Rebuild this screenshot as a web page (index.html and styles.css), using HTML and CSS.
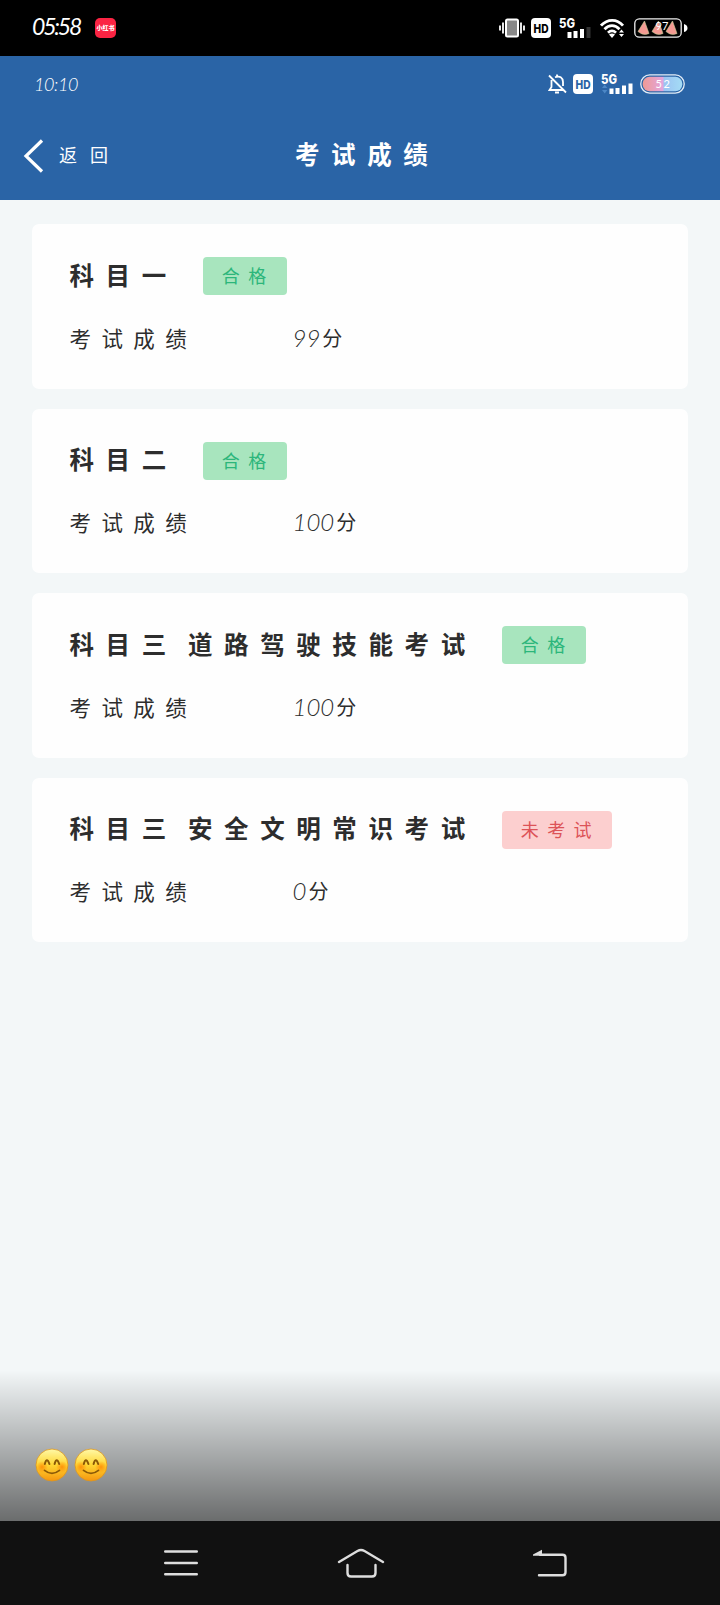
FILE: index.html
```html
<!DOCTYPE html>
<html lang="zh-CN">
<head>
  <meta charset="UTF-8">
  <meta name="viewport" content="width=device-width, initial-scale=1.0">
  <title>考试成绩</title>
  <link rel="stylesheet" href="styles.css">
</head>
<body>
  <!-- Phone status bar -->
  <div class="status-bar">
    <span class="clock">05:58</span>
    <span class="app-badge">小红书</span>
    <div class="status-icons">
      <!-- Vibrate -->
      <svg width="26" height="20" viewBox="0 0 26 20">
        <rect x="7" y="1.5" width="12" height="17" rx="1.5" fill="#888" stroke="#fff" stroke-width="2"/>
        <path d="M4 4.5v11M22 4.5v11M1 7.5v5M25 7.5v5" stroke="#fff" stroke-width="1.8"/>
      </svg>
      <!-- HD -->
      <svg class="hd" width="20" height="20" viewBox="0 0 20 20">
        <rect width="20" height="20" rx="4" fill="#fff"/>
        <text x="10" y="14.7" text-anchor="middle" textLength="15" lengthAdjust="spacingAndGlyphs" fill="#000">HD</text>
      </svg>
      <!-- 5G signal -->
      <svg class="signal" width="33" height="24" viewBox="0 -4 33 24">
        <text x="0" y="9.5" textLength="16" lengthAdjust="spacingAndGlyphs">5G</text>
        <path d="M10.500 14v6M16.500 13v7M23 11v9" stroke="#fff" stroke-width="4"/>
        <path d="M29.500 9v11" stroke="#333" stroke-width="4"/>
      </svg>
      <!-- Wifi -->
      <svg class="wifi" width="25" height="20" viewBox="0 0 25 20">
        <g fill="none" stroke="#fff" stroke-width="2.8">
          <path d="M1 7.6C7.5 .6 17 .6 23 7.6"/>
          <path d="M4.5 11.2C9 6.5 15 6.5 19.5 11.2"/>
          <path d="M8 14.8C10.5 12.4 13.5 12.4 16 14.8"/>
        </g>
        <path d="M9 16.500L12 20l3-3.500q-3-2-6 0zM19 14.500l2.500-3 2.500 3zM19 16l2.500 3 2.500-3z" fill="#fff"/>
      </svg>
      <!-- Battery with watermelon slices -->
      <svg class="battery" width="54" height="20" viewBox="0 0 54 20">
        <rect x=".8" y=".8" width="46.4" height="18.4" rx="4.5" fill="#000" stroke="#eee" stroke-width="1.3"/>
        <g fill="#f49a92" stroke="#c9d39a" stroke-width=".6">
          <path d="M10.500 3L15 15.500Q9 18 4 13.500z"/>
          <path d="M24.500 3L29 15.500Q23 18 18 13.500z"/>
          <path d="M38.500 3L43 15.500Q37 18 32 13.500z"/>
        </g>
        <text x="21.5" y="12">97</text>
        <path d="M50 6q3.500 1 3.500 4T50 14z" fill="#fff"/>
      </svg>
    </div>
  </div>

  <!-- App header -->
  <header class="header">
    <div class="inner-status">
      <span class="inner-clock">10:10</span>
      <div class="inner-icons">
        <!-- Muted bell -->
        <svg width="19" height="20" viewBox="0 0 19 20" fill="none" stroke="#fff" stroke-width="1.8">
          <path d="M3.500 6v7L1.500 16H16M7 3.200Q14.500 1 15 8v4M1 1.500L18 18.500M9 .5v2"/>
          <path d="M7 18.500h4" stroke-width="2"/>
        </svg>
        <svg class="hd" width="20" height="20" viewBox="0 0 20 20">
          <rect width="20" height="20" rx="4" fill="#fff"/>
          <text x="10" y="14.7" text-anchor="middle" textLength="15" lengthAdjust="spacingAndGlyphs" fill="#2a64a6">HD</text>
        </svg>
        <svg class="signal" width="32" height="24" viewBox="0 -4 32 24">
          <text x="0" y="9.5" textLength="16" lengthAdjust="spacingAndGlyphs">5G</text>
          <path d="M1 14l2.700-3.500L6.400 14zM1 16l2.700 3.500L6.400 16z" fill="#4c87c6"/>
          <path d="M10.500 14.500V20M16.500 14v6M23 11.500V20M29.500 9.500V20" stroke="#fff" stroke-width="4"/>
        </svg>
        <svg class="battery" width="46" height="20" viewBox="0 0 46 20">
          <defs>
            <linearGradient id="charge">
              <stop offset="0" stop-color="#ef9a94"/>
              <stop offset=".5" stop-color="#e3a5dc"/>
              <stop offset=".55" stop-color="#9cc4f2"/>
              <stop offset="1" stop-color="#a4dcf5"/>
            </linearGradient>
          </defs>
          <rect x=".8" y=".8" width="43.4" height="18.4" rx="9" fill="#2a64a6" stroke="#e4edf7" stroke-width="1.3"/>
          <rect x="2.7" y="2.7" width="39.6" height="14.6" rx="7" fill="url(#charge)"/>
          <text x="15.5" y="13.5" letter-spacing="1.5">52</text>
        </svg>
      </div>
    </div>
    <div class="title-bar">
      <svg class="chevron" width="21" height="36" viewBox="0 0 21 36">
        <path d="M19 2.500L3 18l16 15.500" fill="none" stroke="#fff" stroke-width="3.2"/>
      </svg>
      <span class="back">返回</span>
      <h1>考试成绩</h1>
    </div>
  </header>

  <!-- Results -->
  <main class="results">
    <section class="card">
      <div class="subject"><h2>科目一</h2><span class="tag pass">合格</span></div>
      <div class="score"><span class="label">考试成绩</span><span class="value">99</span><span class="unit">分</span></div>
    </section>
    <section class="card">
      <div class="subject"><h2>科目二</h2><span class="tag pass">合格</span></div>
      <div class="score"><span class="label">考试成绩</span><span class="value">100</span><span class="unit">分</span></div>
    </section>
    <section class="card">
      <div class="subject"><h2>科目三 道路驾驶技能考试</h2><span class="tag pass">合格</span></div>
      <div class="score"><span class="label">考试成绩</span><span class="value">100</span><span class="unit">分</span></div>
    </section>
    <section class="card">
      <div class="subject"><h2>科目三 安全文明常识考试</h2><span class="tag none">未考试</span></div>
      <div class="score"><span class="label">考试成绩</span><span class="value">0</span><span class="unit">分</span></div>
    </section>
  </main>

  <!-- Caption over the fade -->
  <div class="caption">
    <svg width="34" height="34" viewBox="0 0 34 34">
      <defs>
        <linearGradient id="face" x1="0" y1="0" x2="0" y2="1">
          <stop offset="0" stop-color="#fff9a8"/>
          <stop offset=".5" stop-color="#ffd632"/>
          <stop offset="1" stop-color="#f5960f"/>
        </linearGradient>
        <radialGradient id="blush">
          <stop offset="0" stop-color="#ff8500" stop-opacity=".8"/>
          <stop offset="1" stop-color="#ff8500" stop-opacity="0"/>
        </radialGradient>
      </defs>
      <g id="smile">
        <circle cx="17" cy="17" r="16" fill="url(#face)" stroke="#dc951f" stroke-width=".8"/>
        <circle cx="7" cy="19" r="6" fill="url(#blush)"/>
        <circle cx="27" cy="19" r="6" fill="url(#blush)"/>
        <path d="M9.800 16q2-7.500 4.600 0M19.600 16q2-7.500 4.600 0" fill="none" stroke="#8b5a07" stroke-width="2" stroke-linecap="round"/>
        <path d="M9.500 22.300q7.500 6 15 0" fill="none" stroke="#8b5a07" stroke-width="1.7" stroke-linecap="round"/>
      </g>
    </svg>
    <svg width="34" height="34" viewBox="0 0 34 34"><use href="#smile"/></svg>
  </div>

  <!-- System navigation -->
  <nav class="nav-bar">
    <svg width="34" height="28" viewBox="0 0 34 28">
      <path d="M1.200 2.500h31.600M1.200 14h31.600M1.200 25.300h31.600"/>
    </svg>
    <svg class="home" width="48" height="30" viewBox="0 0 48 30">
      <path d="M2 14L20.500 3q3.500-2 7 0L46 14M10.500 17v8q0 3.500 3.500 3.500h21q3.500 0 3.500-3.500v-8"/>
    </svg>
    <svg width="36" height="28" viewBox="0 0 36 28">
      <path d="M8 5.700h22.500q3 0 3 3v14.600q0 3-3 3H7"/>
      <path class="arrow" d="M1 5.500L10 .7v6H1z"/>
    </svg>
  </nav>
</body>
</html>
```

FILE: styles.css
```css
* {
  box-sizing: border-box;
}

body {
  margin: 0;
  height: 1605px;
  display: flex;
  flex-direction: column;
  overflow: hidden;
  background-color: #f3f7f8;
  color: #2d2d2d;
  font-family: "Noto Sans CJK SC", sans-serif;
}

svg {
  display: block;
  flex-shrink: 0;
}

h1, h2 {
  margin: 0;
  padding-bottom: 4px;
  font-size: 24.5px;
  font-weight: 700;
  letter-spacing: 11.6px;
  white-space: nowrap;
}

/* Status bar */
.status-bar {
  display: flex;
  align-items: center;
  height: 56px;
  padding: 0 32px;
  background-color: #000;
  color: #fff;
}

.clock {
  width: 63px;
  font-family: Lato, sans-serif;
  font-size: 23px;
  font-style: italic;
  font-weight: 400;
  letter-spacing: -2.2px;
  line-height: 50px;
  padding-bottom: 4px;
}

.app-badge {
  width: 21px;
  height: 20px;
  border-radius: 5px;
  background-color: #fb2443;
  font-size: 6px;
  font-weight: 900;
  line-height: 19px;
  text-align: center;
  white-space: nowrap;
}

.status-icons {
  display: flex;
  align-items: flex-end;
  margin-left: auto;
  padding-bottom: 4px;
}

.status-icons .hd {
  margin-left: 6px;
}

.status-icons .signal {
  margin-left: 8px;
}

.wifi {
  margin-left: 8px;
}

.status-icons .battery {
  margin-left: 9px;
}

.hd text {
  font: 800 12px Inter, sans-serif;
}

.signal text {
  font: 800 13px Inter, sans-serif;
  fill: #fff;
}

.battery text {
  font: 400 11px Lato, sans-serif;
  fill: #fff;
}

/* Header */
.header {
  height: 144px;
  background-color: #2a64a6;
  color: #fff;
}

.inner-status {
  display: flex;
  align-items: center;
  height: 56px;
  padding: 0 34px;
}

.inner-clock {
  font-family: Lato, sans-serif;
  font-size: 18px;
  font-style: italic;
  font-weight: 300;
  letter-spacing: -0.4px;
}

.inner-icons {
  display: flex;
  align-items: flex-end;
  margin-left: auto;
  padding-bottom: 4px;
}

.inner-icons .hd {
  margin-left: 6px;
}

.inner-icons .signal {
  margin-left: 8px;
}

.inner-icons .battery {
  margin-left: 7px;
}

.title-bar {
  display: flex;
  align-items: center;
  height: 88px;
  padding: 0 23px 1px;
}

.back {
  width: 236px;
  margin-left: 15px;
  padding-bottom: 3px;
  font-size: 18px;
  letter-spacing: 13px;
}

/* Result cards */
.results {
  display: flex;
  flex-direction: column;
  gap: 20px;
  flex: 1;
  padding: 24px 32px;
}

.card {
  height: 164.6px;
  padding: 33px 37.5px 0;
  border-radius: 7px;
  background-color: #fefefe;
}

.subject {
  display: flex;
  align-items: center;
  height: 38px;
}

.subject h2 {
  word-spacing: -7px;
}

.tag {
  height: 38px;
  margin-left: 25px;
  padding: 0 12px 0 19px;
  border-radius: 4px;
  font-size: 18px;
  letter-spacing: 8.4px;
  line-height: 37px;
}

.pass {
  background-color: #a8e5be;
  color: #2cb67b;
}

.none {
  background-color: #fccfcf;
  color: #dc5358;
}

.score {
  display: flex;
  align-items: center;
  height: 44px;
  margin-top: 20px;
  font-size: 21.5px;
  font-weight: 400;
}

.label {
  width: 223px;
  letter-spacing: 10.4px;
}

.value {
  font-family: Lato, sans-serif;
  font-size: 24px;
  font-style: italic;
  font-weight: 300;
}

.unit {
  margin-left: 2px;
  font-size: 20px;
}

/* Bottom fade */
.caption {
  display: flex;
  gap: 5px;
  height: 151px;
  padding: 78px 35px 0;
  background: linear-gradient(rgba(0, 0, 0, 0), rgba(0, 0, 0, 0.56));
}

/* Navigation bar */
.nav-bar {
  display: flex;
  align-items: center;
  height: 84px;
  padding-left: 163.5px;
  background-color: #111;
}

.nav-bar svg + svg {
  margin-left: 147px;
}

.nav-bar .home {
  margin-left: 139px !important;
}

.nav-bar path {
  fill: none;
  stroke: #dedede;
  stroke-width: 2.4;
  stroke-linecap: round;
}

.nav-bar .arrow {
  fill: #dedede;
  stroke: none;
}
```
